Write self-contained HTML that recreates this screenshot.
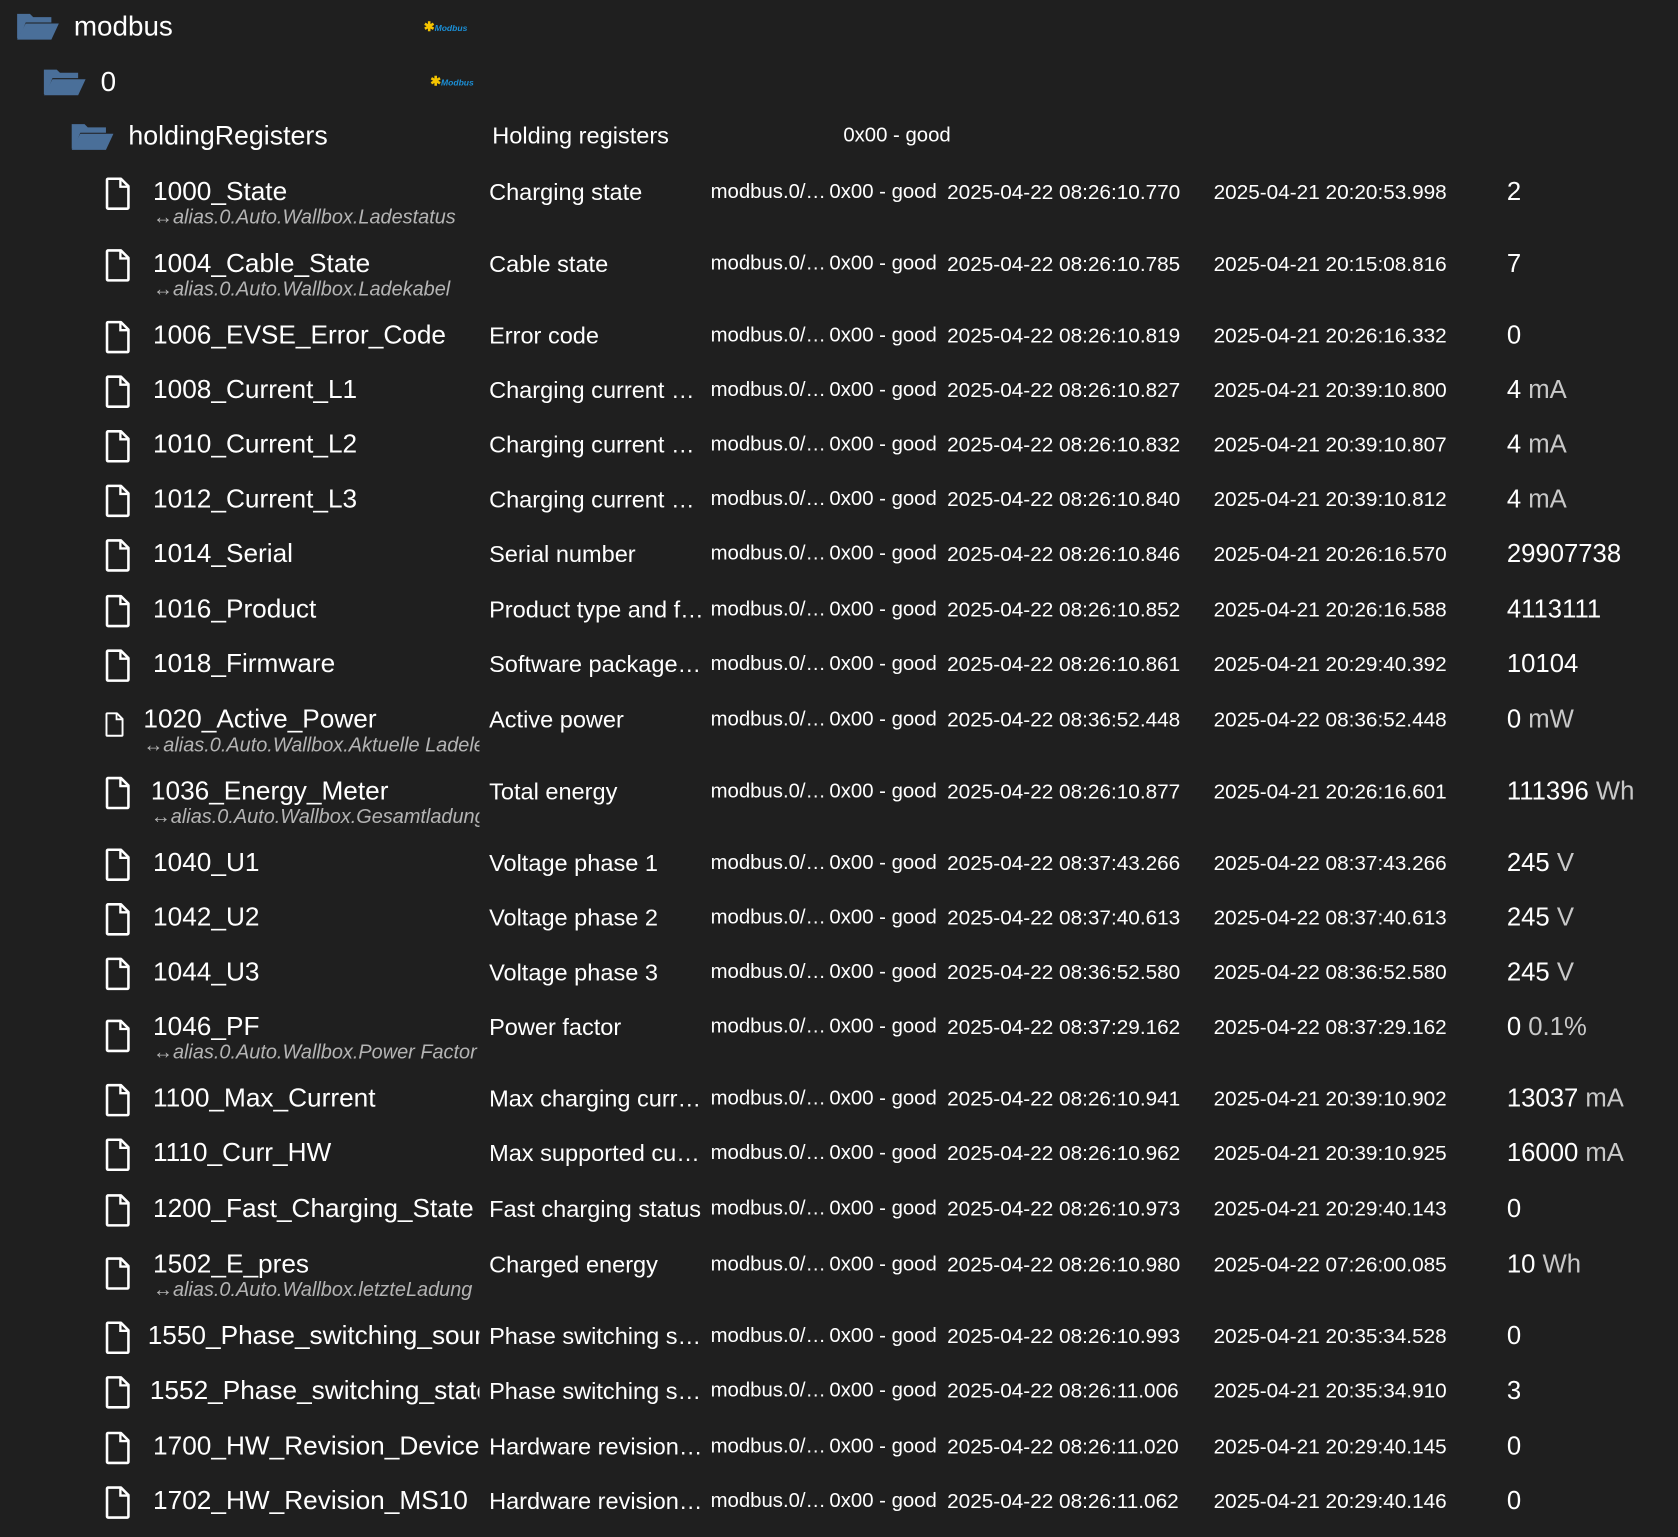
<!DOCTYPE html>
<html><head><meta charset="utf-8"><style>
html,body{margin:0;padding:0;background:#1f1f1f;width:1678px;height:1536px;overflow:hidden}
#w{position:absolute;left:0;top:0;width:1568px;height:1436px;transform:scale(1.0702);transform-origin:0 0;font-family:"Liberation Sans",sans-serif;color:#fff}
.r{position:absolute;left:0;width:1568px;height:0}
.r>*{position:absolute;white-space:nowrap;overflow:hidden}
.ic{left:98px;top:-15px;width:24px;height:32px}
.n{left:143px;top:-15px;font-size:24.5px;line-height:30px;width:305px}
.a{left:143px;top:12px;font-size:18.6px;line-height:22px;font-style:italic;color:#b4b4b4;width:305px}
.d{left:457px;top:-13px;font-size:22px;line-height:26px;width:204px;text-overflow:ellipsis}
.i{left:664px;top:-12px;font-size:19px;line-height:24px;width:108px}
.s{left:775px;top:-12px;font-size:19px;line-height:24px}
.t{left:885px;top:-12px;font-size:19.4px;line-height:24px}
.l{left:1134px;top:-12px;font-size:19.4px;line-height:24px}
.v{left:1408px;top:-14px;font-size:24px;line-height:28px}
.u{color:#c8c8c8}
.f{position:absolute}
.lg{position:absolute;font-size:8px;font-weight:bold;font-style:italic;color:#1b8fd6}
.lg b{color:#f5c400;font-size:12px;font-style:normal}
</style></head><body><div id="w">
<svg width="0" height="0" style="position:absolute"><defs>
<symbol id="file" viewBox="0 0 24 32"><path d="M3 2h12l7 7v20a1 1 0 0 1-1 1H3a1 1 0 0 1-1-1V3a1 1 0 0 1 1-1z" fill="none" stroke="#fff" stroke-width="2.4" stroke-linejoin="round"/><path d="M14.5 2.5v7h7" fill="none" stroke="#fff" stroke-width="2.2"/></symbol>
<symbol id="fold" viewBox="0 0 40 28"><path d="M1 3h12l3 3h17v5H9L3 26H1z" fill="#4a6f99"/><path d="M9 12h31l-7 15H1z" fill="#4a6f99"/></symbol>
</defs></svg>

<svg class="f" style="left:15px;top:10px" width="40" height="28"><use href="#fold"/></svg>
<div class="f" style="left:69px;top:8px;font-size:26px;line-height:32px">modbus</div>
<div class="lg" style="left:396px;top:18px"><b>✱</b>Modbus</div>
<svg class="f" style="left:40px;top:62px" width="40" height="28"><use href="#fold"/></svg>
<div class="f" style="left:94px;top:60px;font-size:26px;line-height:32px">0</div>
<div class="lg" style="left:402px;top:69px"><b>✱</b>Modbus</div>
<svg class="f" style="left:66px;top:113px" width="40" height="28"><use href="#fold"/></svg>
<div class="f" style="left:120px;top:111px;font-size:25px;line-height:32px">holdingRegisters</div>
<div class="f" style="left:460px;top:114px;font-size:22px;line-height:26px">Holding registers</div>
<div class="f" style="left:788px;top:115px;font-size:19px;line-height:24px">0x00 - good</div>

<div class="r" style="top:180px"><svg class="ic"><use href="#file"/></svg><div class="n">1000_State</div><div class="a">↔alias.0.Auto.Wallbox.Ladestatus</div><div class="d">Charging state</div><div class="i">modbus.0/…</div><div class="s">0x00 - good</div><div class="t">2025-04-22 08:26:10.770</div><div class="l">2025-04-21 20:20:53.998</div><div class="v">2</div></div>
<div class="r" style="top:247px"><svg class="ic"><use href="#file"/></svg><div class="n">1004_Cable_State</div><div class="a">↔alias.0.Auto.Wallbox.Ladekabel</div><div class="d">Cable state</div><div class="i">modbus.0/…</div><div class="s">0x00 - good</div><div class="t">2025-04-22 08:26:10.785</div><div class="l">2025-04-21 20:15:08.816</div><div class="v">7</div></div>
<div class="r" style="top:314px"><svg class="ic"><use href="#file"/></svg><div class="n">1006_EVSE_Error_Code</div><div class="d">Error code</div><div class="i">modbus.0/…</div><div class="s">0x00 - good</div><div class="t">2025-04-22 08:26:10.819</div><div class="l">2025-04-21 20:26:16.332</div><div class="v">0</div></div>
<div class="r" style="top:365px"><svg class="ic"><use href="#file"/></svg><div class="n">1008_Current_L1</div><div class="d">Charging current per phase</div><div class="i">modbus.0/…</div><div class="s">0x00 - good</div><div class="t">2025-04-22 08:26:10.827</div><div class="l">2025-04-21 20:39:10.800</div><div class="v">4 <span class="u">mA</span></div></div>
<div class="r" style="top:416px"><svg class="ic"><use href="#file"/></svg><div class="n">1010_Current_L2</div><div class="d">Charging current per phase</div><div class="i">modbus.0/…</div><div class="s">0x00 - good</div><div class="t">2025-04-22 08:26:10.832</div><div class="l">2025-04-21 20:39:10.807</div><div class="v">4 <span class="u">mA</span></div></div>
<div class="r" style="top:467px"><svg class="ic"><use href="#file"/></svg><div class="n">1012_Current_L3</div><div class="d">Charging current per phase</div><div class="i">modbus.0/…</div><div class="s">0x00 - good</div><div class="t">2025-04-22 08:26:10.840</div><div class="l">2025-04-21 20:39:10.812</div><div class="v">4 <span class="u">mA</span></div></div>
<div class="r" style="top:518px"><svg class="ic"><use href="#file"/></svg><div class="n">1014_Serial</div><div class="d">Serial number</div><div class="i">modbus.0/…</div><div class="s">0x00 - good</div><div class="t">2025-04-22 08:26:10.846</div><div class="l">2025-04-21 20:26:16.570</div><div class="v">29907738</div></div>
<div class="r" style="top:570px"><svg class="ic"><use href="#file"/></svg><div class="n">1016_Product</div><div class="d">Product type and firmware</div><div class="i">modbus.0/…</div><div class="s">0x00 - good</div><div class="t">2025-04-22 08:26:10.852</div><div class="l">2025-04-21 20:26:16.588</div><div class="v">4113111</div></div>
<div class="r" style="top:621px"><svg class="ic"><use href="#file"/></svg><div class="n">1018_Firmware</div><div class="d">Software package version</div><div class="i">modbus.0/…</div><div class="s">0x00 - good</div><div class="t">2025-04-22 08:26:10.861</div><div class="l">2025-04-21 20:29:40.392</div><div class="v">10104</div></div>
<div class="r" style="top:673px"><svg class="ic" style="left:98px;top:-8px;width:18px;height:24px" viewBox="0 0 24 32"><use href="#file"/></svg><div class="n" style="left:134px">1020_Active_Power</div><div class="a" style="left:134px;width:314px">↔alias.0.Auto.Wallbox.Aktuelle Ladeleistung</div><div class="d">Active power</div><div class="i">modbus.0/…</div><div class="s">0x00 - good</div><div class="t">2025-04-22 08:36:52.448</div><div class="l">2025-04-22 08:36:52.448</div><div class="v">0 <span class="u">mW</span></div></div>
<div class="r" style="top:740px"><svg class="ic"><use href="#file"/></svg><div class="n" style="left:141px">1036_Energy_Meter</div><div class="a" style="left:141px;width:307px">↔alias.0.Auto.Wallbox.Gesamtladung</div><div class="d">Total energy</div><div class="i">modbus.0/…</div><div class="s">0x00 - good</div><div class="t">2025-04-22 08:26:10.877</div><div class="l">2025-04-21 20:26:16.601</div><div class="v">111396 <span class="u">Wh</span></div></div>
<div class="r" style="top:807px"><svg class="ic"><use href="#file"/></svg><div class="n">1040_U1</div><div class="d">Voltage phase 1</div><div class="i">modbus.0/…</div><div class="s">0x00 - good</div><div class="t">2025-04-22 08:37:43.266</div><div class="l">2025-04-22 08:37:43.266</div><div class="v">245 <span class="u">V</span></div></div>
<div class="r" style="top:858px"><svg class="ic"><use href="#file"/></svg><div class="n">1042_U2</div><div class="d">Voltage phase 2</div><div class="i">modbus.0/…</div><div class="s">0x00 - good</div><div class="t">2025-04-22 08:37:40.613</div><div class="l">2025-04-22 08:37:40.613</div><div class="v">245 <span class="u">V</span></div></div>
<div class="r" style="top:909px"><svg class="ic"><use href="#file"/></svg><div class="n">1044_U3</div><div class="d">Voltage phase 3</div><div class="i">modbus.0/…</div><div class="s">0x00 - good</div><div class="t">2025-04-22 08:36:52.580</div><div class="l">2025-04-22 08:36:52.580</div><div class="v">245 <span class="u">V</span></div></div>
<div class="r" style="top:960px"><svg class="ic" style="top:-8px"><use href="#file"/></svg><div class="n">1046_PF</div><div class="a">↔alias.0.Auto.Wallbox.Power Factor</div><div class="d">Power factor</div><div class="i">modbus.0/…</div><div class="s">0x00 - good</div><div class="t">2025-04-22 08:37:29.162</div><div class="l">2025-04-22 08:37:29.162</div><div class="v">0 <span class="u">0.1%</span></div></div>
<div class="r" style="top:1027px"><svg class="ic"><use href="#file"/></svg><div class="n">1100_Max_Current</div><div class="d">Max charging current</div><div class="i">modbus.0/…</div><div class="s">0x00 - good</div><div class="t">2025-04-22 08:26:10.941</div><div class="l">2025-04-21 20:39:10.902</div><div class="v">13037 <span class="u">mA</span></div></div>
<div class="r" style="top:1078px"><svg class="ic"><use href="#file"/></svg><div class="n">1110_Curr_HW</div><div class="d">Max supported current</div><div class="i">modbus.0/…</div><div class="s">0x00 - good</div><div class="t">2025-04-22 08:26:10.962</div><div class="l">2025-04-21 20:39:10.925</div><div class="v">16000 <span class="u">mA</span></div></div>
<div class="r" style="top:1130px"><svg class="ic"><use href="#file"/></svg><div class="n">1200_Fast_Charging_State</div><div class="d">Fast charging status</div><div class="i">modbus.0/…</div><div class="s">0x00 - good</div><div class="t">2025-04-22 08:26:10.973</div><div class="l">2025-04-21 20:29:40.143</div><div class="v">0</div></div>
<div class="r" style="top:1182px"><svg class="ic" style="top:-8px"><use href="#file"/></svg><div class="n">1502_E_pres</div><div class="a">↔alias.0.Auto.Wallbox.letzteLadung</div><div class="d">Charged energy</div><div class="i">modbus.0/…</div><div class="s">0x00 - good</div><div class="t">2025-04-22 08:26:10.980</div><div class="l">2025-04-22 07:26:00.085</div><div class="v">10 <span class="u">Wh</span></div></div>
<div class="r" style="top:1249px"><svg class="ic"><use href="#file"/></svg><div class="n" style="left:138px;width:310px">1550_Phase_switching_source</div><div class="d">Phase switching source</div><div class="i">modbus.0/…</div><div class="s">0x00 - good</div><div class="t">2025-04-22 08:26:10.993</div><div class="l">2025-04-21 20:35:34.528</div><div class="v">0</div></div>
<div class="r" style="top:1300px"><svg class="ic"><use href="#file"/></svg><div class="n" style="left:140px;width:308px">1552_Phase_switching_state</div><div class="d">Phase switching state</div><div class="i">modbus.0/…</div><div class="s">0x00 - good</div><div class="t">2025-04-22 08:26:11.006</div><div class="l">2025-04-21 20:35:34.910</div><div class="v">3</div></div>
<div class="r" style="top:1352px"><svg class="ic"><use href="#file"/></svg><div class="n">1700_HW_Revision_Device</div><div class="d">Hardware revision device</div><div class="i">modbus.0/…</div><div class="s">0x00 - good</div><div class="t">2025-04-22 08:26:11.020</div><div class="l">2025-04-21 20:29:40.145</div><div class="v">0</div></div>
<div class="r" style="top:1403px"><svg class="ic"><use href="#file"/></svg><div class="n">1702_HW_Revision_MS10</div><div class="d">Hardware revision MS10</div><div class="i">modbus.0/…</div><div class="s">0x00 - good</div><div class="t">2025-04-22 08:26:11.062</div><div class="l">2025-04-21 20:29:40.146</div><div class="v">0</div></div>
</div></body></html>
